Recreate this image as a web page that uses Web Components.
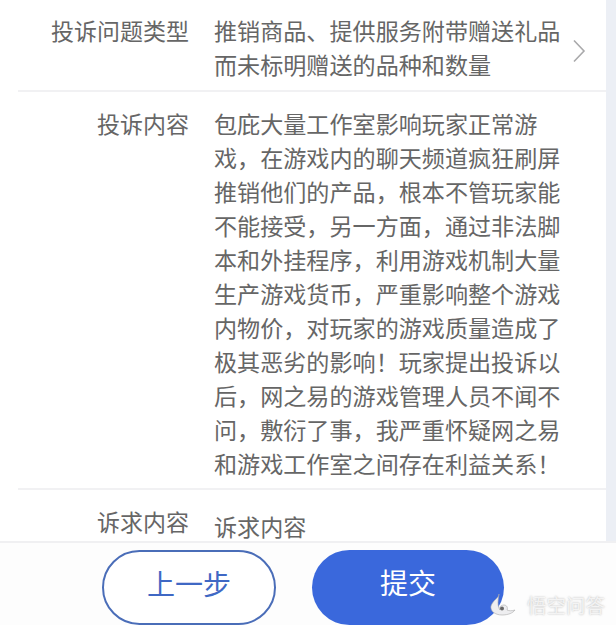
<!DOCTYPE html>
<html lang="zh-CN">
<head>
<meta charset="utf-8">
<style>
  html,body{margin:0;padding:0;height:625px;overflow:hidden;background:#fff}
  body{font-family:"Noto Sans CJK SC","Liberation Sans",sans-serif}
</style>
</head>
<body>
<complaint-page>
  <form-row label="投诉问题类型" arrow style="--top:13px;--bottom:9px">推销商品、提供服务附带赠送礼品而未标明赠送的品种和数量</form-row>
  <form-row label="投诉内容" style="--top:14px;--bottom:8px">包庇大量工作室影响玩家正常游戏&#xFF0C;在游戏内的聊天频道疯狂刷屏推销他们的产品&#xFF0C;根本不管玩家能不能接受&#xFF0C;另一方面&#xFF0C;通过非法脚本和外挂程序&#xFF0C;利用游戏机制大量生产游戏货币&#xFF0C;严重影响整个游戏内物价&#xFF0C;对玩家的游戏质量造成了极其恶劣的影响&#xFF01;玩家提出投诉以后&#xFF0C;网之易的游戏管理人员不闻不问&#xFF0C;敷衍了事&#xFF0C;我严重怀疑网之易和游戏工作室之间存在利益关系&#xFF01;</form-row>
  <form-row label="诉求内容" last style="--top:19px;--bottom:0px;--label-shift:-5px">诉求内容</form-row>
  <action-bar slot="footer"></action-bar>
</complaint-page>

<script>
class ComplaintPage extends HTMLElement {
  constructor(){
    super();
    this.attachShadow({mode:'open'});
    this.shadowRoot.innerHTML = `
      <style>
        :host{display:flex;flex-direction:column;width:616px;height:625px;overflow:hidden;background:#fff}
        .scroll{flex:none;height:541px;overflow:hidden;background:#fff;border-right:10px solid #eceff5;box-sizing:border-box;padding-left:18px}
      </style>
      <div class="scroll"><slot></slot></div>
      <slot name="footer"></slot>
    `;
  }
}

class FormRow extends HTMLElement {
  constructor(){
    super();
    this.attachShadow({mode:'open'});
    this.shadowRoot.innerHTML = `
      <style>
        :host{display:grid;grid-template-columns:171px 347px 31px;column-gap:25px;box-sizing:border-box;padding:var(--top,14px) 0 var(--bottom,8px);border-bottom:2px solid #f1f1f3;color:#666;font-size:23px;line-height:34px}
        :host([last]){border-bottom:none}
        .label{text-align:right;margin-top:var(--label-shift,0);color:#666}
        .value{color:#666;font-size:23.1px}
        .arrow{display:none;align-self:center;margin-left:-14px;margin-top:7px}
        :host([arrow]) .arrow{display:block}
      </style>
      <div class="label"></div>
      <div class="value"><slot></slot></div>
      <svg class="arrow" width="14" height="24" viewBox="0 0 14 24" fill="none" stroke="#a9a9ab" stroke-width="1.6"><path d="M2 1.500l10 10.500L2 22.500"/></svg>
    `;
  }
  connectedCallback(){
    this.shadowRoot.querySelector('.label').textContent = this.getAttribute('label')||'';
  }
}

class ActionBar extends HTMLElement {
  constructor(){
    super();
    this.attachShadow({mode:'open'});
    this.shadowRoot.innerHTML = `
      <style>
        :host{display:block;position:relative;flex:1;background:#fdfdfd;border-top:2px solid #f0f0f2;box-sizing:border-box}
        .btns{display:flex;gap:36px;padding:7px 0 0 102px}
        button{box-sizing:border-box;width:174px;height:75px;border-radius:38px;font:inherit;font-size:28px;line-height:1;padding:0 0 9px;background:#fff;color:#3f68c4;border:2px solid #4a6db8}
        .primary{width:192px;background:#3a68dc;border:none;color:#fff;padding-bottom:12px}
        .mark{position:absolute;left:490px;top:49px;display:flex;align-items:center;gap:11px;font-size:19.5px;line-height:26px;color:rgba(255,255,255,.75);text-shadow:0 0 2px rgba(130,130,130,.6);pointer-events:none}
      </style>
      <div class="btns">
        <button type="button">上一步</button>
        <button type="button" class="primary">提交</button>
      </div>
      <div class="mark">
        <svg width="26" height="24" viewBox="0 0 26 24"><path d="M9 1C9 5 3 7 1 13c-1 5 4 9 11 9 6 0 11-2 13-5-3 1-6 1-8 0 1-2 0-5-3-5-4 0-5 3-4 5C7 13 8 7 9 1z" fill="#eeeef0" stroke="#aaa" stroke-width=".6"/><circle cx="12" cy="15.500" r="2" fill="#666"/></svg>
        <span>悟空问答</span>
      </div>
    `;
  }
}

customElements.define('complaint-page', ComplaintPage);
customElements.define('form-row', FormRow);
customElements.define('action-bar', ActionBar);
</script>
</body>
</html>
